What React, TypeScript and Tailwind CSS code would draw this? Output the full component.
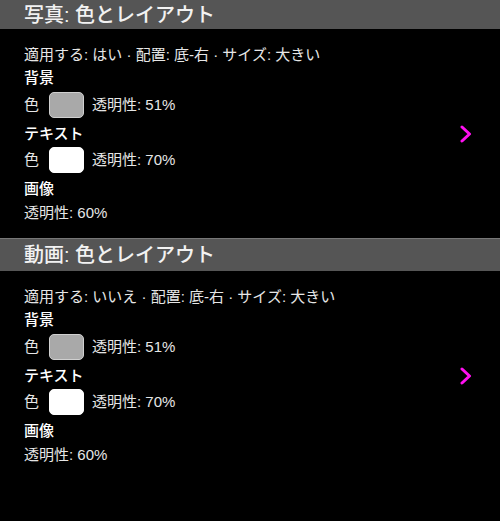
import React from "react"

type Section = {
  title: string
  apply: string
  first?: boolean
}

const sections: Section[] = [
  { title: "写真: 色とレイアウト", apply: "はい", first: true },
  { title: "動画: 色とレイアウト", apply: "いいえ" },
]

function Swatch({ white }: { white?: boolean }) {
  return (
    <span
      className={
        "inline-block h-[26px] w-[35px] rounded-[5px] border " +
        (white ? "bg-white border-white" : "bg-[#a9a9a9] border-[#d0d0d0]")
      }
    />
  )
}

function Chevron() {
  return (
    <svg width="12" height="18" viewBox="0 0 12 18" fill="none">
      <polyline
        points="2,2 9.5,9 2,16"
        stroke="#ff10f0"
        strokeWidth="3"
        strokeLinecap="round"
        strokeLinejoin="round"
      />
    </svg>
  )
}

function SettingsSection({ s }: { s: Section }) {
  return (
    <div className="flex flex-col">
      <div
        className={
          "flex items-center bg-[#555555] px-6 text-[20px] font-medium text-[#f2f2f2] " +
          (s.first ? "h-[29px]" : "h-[33px] border-t border-[#777777]")
        }
      >
        {s.title}
      </div>
      <div className="flex items-center pr-7">
        <div className="flex flex-1 flex-col px-6 pt-[16px] text-[15px] leading-[20px] text-[#e6e6e6]">
          <div>適用する: {s.apply} · 配置: 底-右 · サイズ: 大きい</div>
          <div className="mt-[3px] font-medium text-white">背景</div>
          <div className="mt-[4px] flex items-center">
            <span>色</span>
            <span className="ml-[10px] mr-[8px] flex">
              <Swatch />
            </span>
            <span>透明性: 51%</span>
          </div>
          <div className="mt-[6px] font-medium text-white">テキスト</div>
          <div className="mt-[3px] flex items-center">
            <span>色</span>
            <span className="ml-[10px] mr-[8px] flex">
              <Swatch white />
            </span>
            <span>透明性: 70%</span>
          </div>
          <div className="mt-[6px] font-medium text-white">画像</div>
          <div className="mt-[4px]">透明性: 60%</div>
          <div className="h-[15px]" />
        </div>
        <Chevron />
      </div>
    </div>
  )
}

export default function App() {
  return (
    <div className="h-[521px] w-[500px] overflow-hidden bg-black font-['Liberation_Sans','Noto_Sans_CJK_JP',sans-serif]">
      {sections.map((s) => (
        <SettingsSection key={s.title} s={s} />
      ))}
    </div>
  )
}
